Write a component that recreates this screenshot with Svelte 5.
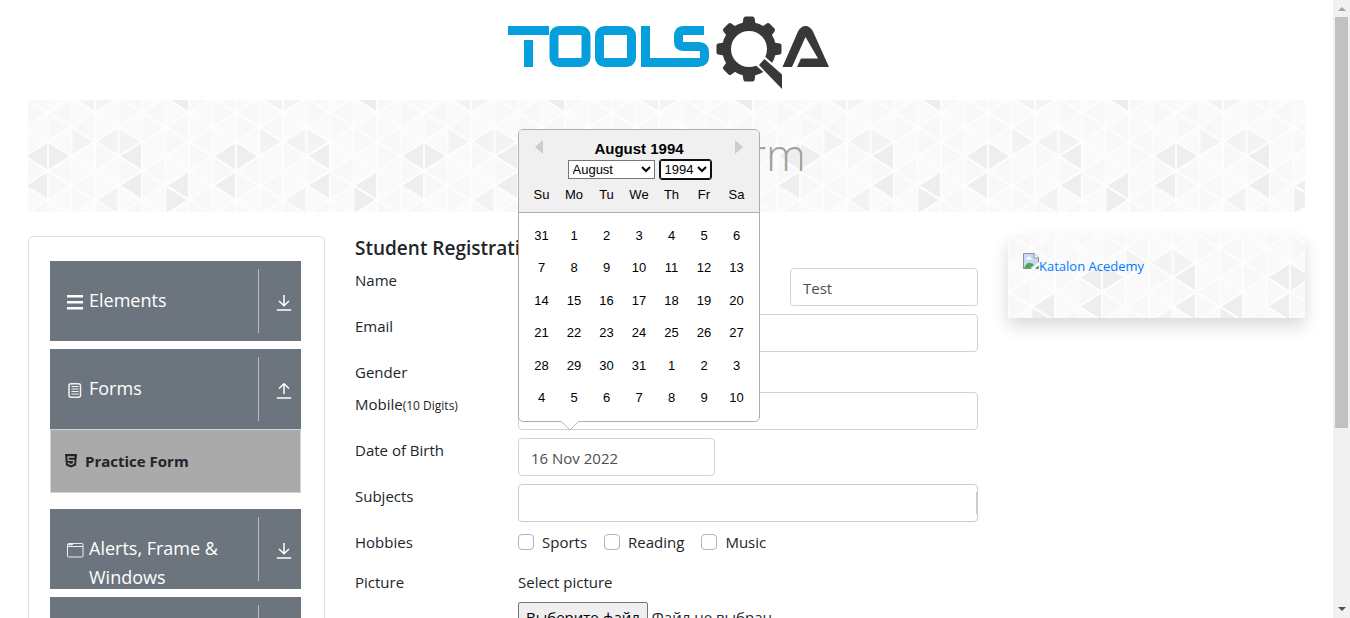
<script>
  const months = ['January', 'February', 'March', 'April', 'May', 'June', 'July', 'August', 'September', 'October', 'November', 'December'];
  const weekdays = ['Su', 'Mo', 'Tu', 'We', 'Th', 'Fr', 'Sa'];
  const weeks = [
    [31, 1, 2, 3, 4, 5, 6],
    [7, 8, 9, 10, 11, 12, 13],
    [14, 15, 16, 17, 18, 19, 20],
    [21, 22, 23, 24, 25, 26, 27],
    [28, 29, 30, 31, 1, 2, 3],
    [4, 5, 6, 7, 8, 9, 10]
  ];
  const hobbies = ['Sports', 'Reading', 'Music'];

  // Shades of the triangle backdrop, keyed by strip and half-row.
  const strong = ['0:3', '0:5', '1:3', '4:3', '4:5', '6:5', '6:6', '6:-1'];
  const medium = ['2:2', '3:6', '2:-1', '3:-1', '3:2', '4:2'];
  const W = 23.5;
  const H = 14.6;
  const triangles = [];
  for (let i = 0; i < 9; i++) {
    for (let r = -1; r < 8; r++) {
      const col = i % 8;
      const key = col + ':' + r;
      const x = -3.5 + i * W;
      const y = 12.5 + r * H;
      // Lines with odd index hold vertices at even half-rows.
      const pointsLeft = (i + r) % 2 !== 0;
      const edge = pointsLeft ? x + W - 1 : x + 1;
      const tip = pointsLeft ? x + 2.5 : x + W - 2.5;
      const fill = strong.includes(key) ? '#eeeeee' : medium.includes(key) ? '#f3f3f3' : (col * 5 + r * 3 + 20) % 4 < 2 ? '#f8f8f8' : '#fafafa';
      triangles.push({ d: `M${edge} ${y - H + 2}L${tip} ${y}L${edge} ${y + H - 2}Z`, fill });
    }
  }
  const gearTeeth = [0, 45, 90, 180, 225, 270, 315];
</script>

{#snippet backdrop(id, dx, dy)}
  <svg class="backdrop" aria-hidden="true">
    <defs>
      <pattern {id} width="188" height="117" patternUnits="userSpaceOnUse" patternTransform="translate({dx} {dy})">
        <rect width="188" height="117" fill="#fdfdfd" />
        {#each triangles as t}<path d={t.d} fill={t.fill} />{/each}
      </pattern>
    </defs>
    <rect width="100%" height="100%" fill="url(#{id})" />
  </svg>
{/snippet}

{#snippet arrow(up)}
  <svg class="arrow" viewBox="0 0 16 16" aria-hidden="true">
    <path d={up ? 'M8 11V1M3 5.5L8 .8l5 4.7' : 'M8 0v10.5M3 6l5 4.8L13 6'} />
    <path d="M.8 15h14.4" />
  </svg>
{/snippet}

<div class="page">
  <header>
    <svg class="logo" viewBox="0 0 322 74" role="img" aria-label="Tools QA">
      <g fill="none" stroke="#069fdc" stroke-width="9">
        <path d="M0 14.5H41M20.500 24V51" />
        <rect x="46" y="14.500" width="32" height="32" rx="5" />
        <rect x="91.500" y="14.500" width="32" height="32" rx="5" />
        <path d="M137.500 10V46.500H190q6.500 0 6.500-6v-4q0-6-6-6H175q-4.500 0-4.500-4.500v-6q0-5.500 5-5.500H196" />
      </g>
      <g fill="#383838">
        <path fill-rule="evenodd" d="M241 6a27 27 0 0 1 0 54a27 27 0 0 1 0-54Zm0 9a18 18 0 0 0 0 36a18 18 0 0 0 0-36Z" />
        {#each gearTeeth as a}
          <path transform="rotate({a} 241 33)" d="M234.500 8l1-6q.5-1.500 2-1.500h7q1.500 0 2 1.500l1 6Z" />
        {/each}
      </g>
      <path d="M245 47l9-9 25 22v16Z" fill="#fff" />
      <path d="M251 49l5.500-6L274 58.500V73Z" fill="#383838" />
      <path fill="#383838" fill-rule="evenodd" d="M274.500 51L290 15.500q3-5.500 7.500-5.500t7.500 5.500L321 51H289l4-8.500h17L297.500 21 284 51Z" />
    </svg>
  </header>

  <div class="banner">
    {@render backdrop('tri-banner', 0, 0)}
    <h1>Practice Form</h1>
  </div>

  <main>
    <nav>
      <button class="group">
        <span class="icon"><svg viewBox="0 0 18 16" width="18" height="16" fill="#fff"><path d="M1 1h16v2.500H1zM1 7h16v2.500H1zM1 13h16v2.500H1z" /></svg></span>
        <span class="label">Elements</span>
        <span class="toggle">{@render arrow(false)}</span>
      </button>
      <div>
        <button class="group">
          <span class="icon"><svg viewBox="0 0 18 16" width="18" height="16" fill="none" stroke="#f2f4f4"><rect x="3" y="1.700" width="11.500" height="13.500" rx="2" stroke-width="1.500" /><path d="M5.500 4.500h7M5.500 7h7M5.500 9.500h7M5.500 12h7" stroke-width="1" /></svg></span>
          <span class="label">Forms</span>
          <span class="toggle">{@render arrow(true)}</span>
        </button>
        <a class="item" href="#practice-form">
          <svg viewBox="0 0 12 14" width="12" height="14" aria-hidden="true"><path d="M0 0h12l-1 11.500L6 13.500 1 11.500Z" fill="#212529" /><path d="M9.500 3H3l.3 3.300h5.500L8.500 9.500 6 10.500 3.500 9.500V8.500" fill="none" stroke="#aaa" stroke-width="1.300" /></svg>
          Practice Form
        </a>
      </div>
      <button class="group">
        <span class="icon"><svg viewBox="0 0 18 16" width="18" height="16" fill="none" stroke="#eceeee"><rect x="1.500" y="1.500" width="15.500" height="13.500" rx="1" /><path d="M1.500 4.500H17M2 2.500h5" /><path d="M3.500 1.500v2M5.500 1.500v2" stroke-width=".8" /></svg></span>
        <span class="label">Alerts, Frame &amp; Windows</span>
        <span class="toggle">{@render arrow(false)}</span>
      </button>
      <button class="group">
        <span class="icon"></span>
        <span class="label">Widgets</span>
        <span class="toggle">{@render arrow(false)}</span>
      </button>
    </nav>

    <form id="practice-form">
      <h5>Student Registration Form</h5>
      <div class="row">
        <label for="first">Name</label>
        <div class="names">
          <input id="first" type="text" />
          <span></span>
          <input id="last" type="text" aria-label="Last Name" value="Test" />
        </div>
      </div>
      <div class="row"><label for="email">Email</label><input id="email" type="email" /></div>
      <div class="row short"><span class="caption">Gender</span></div>
      <div class="row"><label for="mobile">Mobile<small>(10 Digits)</small></label><input id="mobile" type="tel" /></div>
      <div class="row">
        <label for="dob">Date of Birth</label>
        <div class="date">
          <input id="dob" type="text" value="16 Nov 2022" />
          <div class="calendar">
            <div class="cal-head">
              <button type="button" class="prev" aria-label="Previous Month"></button>
              <strong>August 1994</strong>
              <button type="button" class="next" aria-label="Next Month"></button>
              <div class="selects">
                <select class="month" aria-label="Month" value="August">
                  {#each months as m}<option value={m}>{m}</option>{/each}
                </select>
                <select class="year" aria-label="Year" value="1994">
                  {#each ['1993', '1994', '1995'] as y}<option value={y}>{y}</option>{/each}
                </select>
              </div>
              <div class="week names-row">{#each weekdays as d}<span>{d}</span>{/each}</div>
            </div>
            <div class="cal-body">
              {#each weeks as week}
                <div class="week">{#each week as day}<button type="button">{day}</button>{/each}</div>
              {/each}
            </div>
            <svg class="tip" viewBox="0 0 18 10" width="18" height="10" aria-hidden="true"><path d="M0 0h18L9 9Z" fill="#fff" /><path d="M.5 .5L9 9l8.500-8.500" fill="none" stroke="#b8b8b8" /></svg>
          </div>
        </div>
      </div>
      <div class="row">
        <label for="subjects">Subjects</label>
        <div class="subjects"><input id="subjects" type="text" /></div>
      </div>
      <div class="row hobbies-row">
        <span class="caption">Hobbies</span>
        <div class="hobbies">
          {#each hobbies as h}<label><input type="checkbox" />{h}</label>{/each}
        </div>
      </div>
      <div class="row">
        <span class="caption">Picture</span>
        <div class="upload">
          <label for="pick">Select picture</label>
          <div class="file"><button type="button" id="pick">Выберите файл</button><span>Файл не выбран</span></div>
        </div>
      </div>
    </form>

    <aside>
      {@render backdrop('tri-card', 74, -15)}
      <a href="#katalon">
        <svg viewBox="0 0 16 16" width="16" height="16" aria-hidden="true">
          <path d="M.5 .5h10.500l4.500 4.500v10.500H.5Z" fill="#c6d8f6" stroke="#909090" />
          <path d="M11 .5V5h4.500" fill="#fff" stroke="#909090" />
          <path d="M3 6q0-2 2-1.500 1-2 2.500 0Q9 5 8.500 6.500H3Z" fill="#fff" />
          <path d="M1 15q3-6 6.500-5Q10 10 11 12l-4 3Z" fill="#53a93f" />
          <path d="M8 16l8-7v3.500L12 16Z" fill="#fff" />
          <path d="M12 15.500l3.500-3v3Z" fill="#53a93f" />
        </svg>Katalon Acedemy</a>
    </aside>
  </main>
</div>

<div class="scrollbar" aria-hidden="true"><i class="up"></i><i class="thumb"></i><i class="down"></i></div>

<style>
  :global(html) { scrollbar-width: none; }
  :global(body) { overflow: hidden; height: 100vh; display: grid; }
  :global(#app) { display: flex; min-height: 0; overflow: hidden; font: 15px/24px 'Open Sans', 'Noto Sans', sans-serif; color: #212529; }
  :global(*) { box-sizing: border-box; }
  button, input, select { font: inherit; color: inherit; margin: 0; }
  .page { flex: 1; min-width: 0; padding: 0 28px; }
  header { height: 100px; padding-top: 16px; display: flex; justify-content: center; }
  .logo { width: 322px; height: 74px; margin-left: 4px; }
  .backdrop { position: absolute; inset: 0; width: 100%; height: 100%; z-index: -1; }
  .banner { position: relative; isolation: isolate; overflow: hidden; border-radius: 5px; padding: 26px 0 30px; text-align: center; }
  h1 { margin: 0; font-size: 45px; line-height: 56px; font-weight: 300; color: #a0a0a0; }
  main { display: grid; grid-template-columns: 297fr 653fr 297fr; column-gap: 15px; padding-top: 24px; align-items: start; }
  nav { border: 1px solid #dfdfdf; border-radius: 5px; padding: 24px 23px 24px 21px; display: flex; flex-direction: column; gap: 8px; }
  .group { width: 100%; height: 80px; overflow: hidden; border: 0; background: #6c757d; color: #fff; display: grid; grid-template-columns: 18px 1fr 43px; column-gap: 5px; padding: 8px 0 0 16px; text-align: left; font-size: 18px; line-height: 29px; align-items: start; }
  .icon { padding-top: 25px; display: flex; }
  .label { padding-top: 17px; }
  .toggle { height: 64px; border-left: 1px solid #b9bcbe; display: grid; place-items: center; padding: 4px 0 0 7px; }
  .arrow { width: 16px; height: 16px; fill: none; stroke: #fff; stroke-width: 1.5; }
  .item { display: flex; align-items: center; gap: 8px; height: 64px; padding: 0 14px; margin-bottom: 8px; border: 1px solid #ced4da; background: #aaa; font-weight: 700; color: #212529; text-decoration: none; }
  form { padding: 0 15px; }
  h5 { margin: 0 0 8px; font-size: 19px; line-height: 24px; font-weight: 600; }
  .row { display: grid; grid-template-columns: 163px 1fr; min-height: 38px; margin-bottom: 8px; align-items: start; }
  .short { min-height: 24px; }
  input[type='text'], input[type='email'], input[type='tel'] { width: 100%; height: 38px; padding: 4px 12px 2px; border: 1px solid #ced4da; border-radius: 4px; background: #fff; color: #495057; outline: 0; }
  small { font-size: 12px; }
  .names { display: grid; grid-template-columns: 188fr 84px 188fr; }
  .date { position: relative; }
  #dob { width: 197px; display: block; }
  .calendar { position: absolute; z-index: 2; left: 0; bottom: 54px; width: 242px; border: 1px solid #aeaeae; border-radius: 5px; background: #fff; color: #000; font: 13px/27px 'Liberation Sans', Arial, sans-serif; }
  .cal-head { position: relative; padding-top: 8px; background: #f0f0f0; border-bottom: 1px solid #aeaeae; border-radius: 4px 4px 0 0; text-align: center; }
  strong { display: block; font-size: 15px; line-height: 22px; }
  .prev, .next { position: absolute; top: 10px; width: 8px; height: 14px; padding: 0; border: 0; background: #ccc; }
  .prev { left: 16px; clip-path: polygon(100% 0, 0 50%, 100% 100%); }
  .next { right: 16px; clip-path: polygon(0 0, 100% 50%, 0 100%); }
  .selects { display: flex; justify-content: center; gap: 5px; height: 20px; }
  select { height: 19px; padding: 0; border: 1px solid #767676; background: #fff; line-height: 17px; color: #000; }
  .month { width: 87px; border-radius: 0; }
  .year { width: 51px; outline: 1px solid #101010; border-color: #101010; border-radius: 2px; }
  .week { display: grid; grid-template-columns: repeat(7, 27px); justify-content: space-between; padding: 0 9px; text-align: center; }
  .names-row { height: 32px; padding-top: 1px; }
  .week button { height: 27px; padding: 0; border: 0; background: none; }
  .cal-body { display: grid; align-content: space-between; height: 208px; padding: 9px 0 10px; }
  .tip { position: absolute; left: 42px; top: 100%; }
  .subjects { height: 38px; padding: 7px 0; border: 1px solid #ccc; border-radius: 4px; }
  .subjects #subjects { display: block; height: 22px; padding: 0; border: 0; border-right: 1px solid #ccc; border-radius: 0; }
  .hobbies-row { min-height: 32px; }
  .hobbies { display: flex; gap: 17px; }
  .hobbies label { display: flex; align-items: center; gap: 8px; }
  .hobbies input { appearance: none; width: 16px; height: 16px; border: 1px solid #adb5bd; border-radius: 4px; background: #fff; }
  .upload > label { display: block; margin-bottom: 8px; }
  .file { display: flex; gap: 4px; }
  .file button { border: 1px solid #767676; border-radius: 2px; background: #efefef; color: #000; padding: 0 7px; height: 30px; }
  .file span { line-height: 30px; }
  aside { position: relative; isolation: isolate; height: 82px; padding: 17px 15px; box-shadow: 0 8px 16px rgba(0, 0, 0, .15); }
  aside a { display: flex; color: #007bff; text-decoration: none; font-size: 13px; line-height: 26px; }
  .scrollbar { width: 17px; background: #f1f1f1; display: flex; flex-direction: column; align-items: center; height: 100vh; padding: 7px 0; }
  .thumb { width: 13px; flex: 0 0 68%; margin-top: 6px; background: #c1c1c1; }
  .up, .down { border: 4px solid transparent; border-top: 0; border-bottom: 4px solid #a3a3a3; }
  .down { margin-top: auto; border-bottom: 0; border-top: 4px solid #505050; }
</style>
